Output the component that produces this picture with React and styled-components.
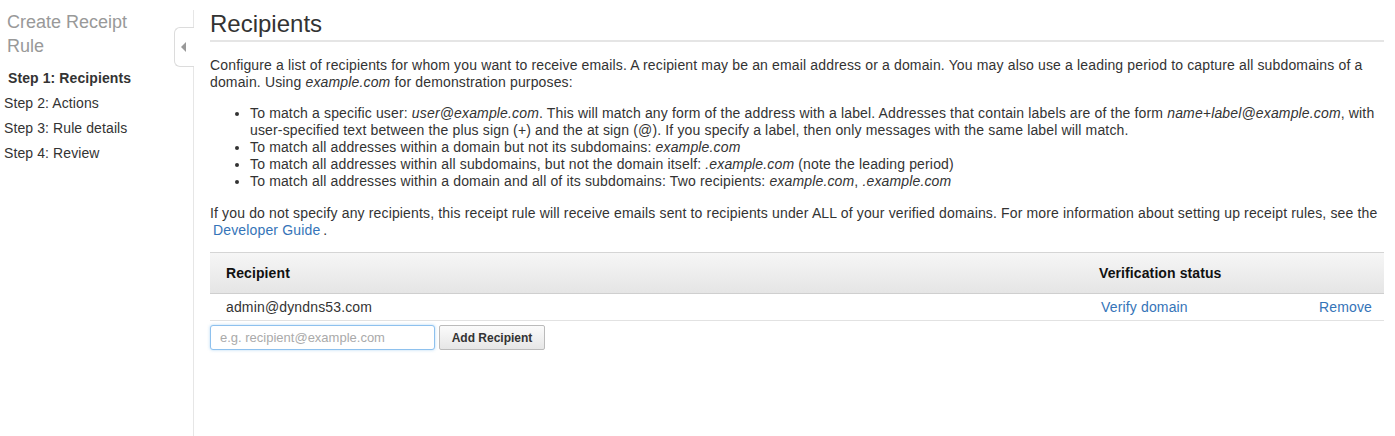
import React from 'react'
import styled, { createGlobalStyle } from 'styled-components'

const GlobalStyle = createGlobalStyle`
  html, body {
    margin: 0;
    padding: 0;
    background: #fff;
  }
  body {
    font-family: 'Liberation Sans', Arial, sans-serif;
    font-size: 14px;
    color: #333;
  }
`

const Page = styled.div`
  display: flex;
  width: 1395px;
  height: 436px;
  overflow: hidden;
`

const Sidebar = styled.div`
  position: relative;
  width: 193px;
  flex-shrink: 0;
  margin-top: 10px;
  border-right: 1px solid #e6e6e6;
`

const SideTitle = styled.div`
  font-size: 18px;
  line-height: 24px;
  color: #999;
  padding-left: 7px;
  width: 150px;
`

const Steps = styled.div`
  margin-top: 8px;
  display: flex;
  flex-direction: column;
`

const Step = styled.div`
  font-size: 14px;
  line-height: 25px;
  color: #333;
  letter-spacing: 0.1px;
  padding-left: ${p => (p.$active ? '8px' : '4px')};
  font-weight: ${p => (p.$active ? 700 : 400)};
`

const CollapseTab = styled.div`
  position: absolute;
  right: -1px;
  top: 17px;
  width: 20px;
  height: 40px;
  background: #fff;
  border: 1px solid #dcdcdc;
  border-right: none;
  border-radius: 6px 0 0 6px;
  display: flex;
  align-items: center;
  justify-content: center;
  padding-right: 2px;
  box-sizing: border-box;
`

const Arrow = styled.span`
  width: 0;
  height: 0;
  border-top: 5px solid transparent;
  border-bottom: 5px solid transparent;
  border-right: 5px solid #999;
`

const Main = styled.div`
  flex: 1;
  padding: 0 11px 0 16px;
  letter-spacing: 0.15px;
`

const Heading = styled.h1`
  margin: 10px 0 0;
  font-size: 24px;
  font-weight: 400;
  line-height: 28px;
  letter-spacing: 0;
  color: #333;
  padding-bottom: 2px;
  border-bottom: 2px solid #e5e5e5;
`

const Para = styled.p`
  margin: ${p => p.$top || '14px'} 0 0;
  line-height: 17px;
`

const List = styled.ul`
  margin: 14px 0 0;
  padding-left: 40px;
  line-height: 17px;
`

const Link = styled.a`
  color: #3574b8;
  text-decoration: none;
  padding: 0 ${p => (p.$pad ? '3px' : '0')};
  cursor: pointer;
`

const Table = styled.div`
  margin-top: 13px;
  border-top: 1px solid #d5d5d5;
`

const HeadRow = styled.div`
  display: grid;
  grid-template-columns: 873px 1fr auto;
  height: 40px;
  align-items: center;
  background: linear-gradient(#f6f6f6, #e5e5e5);
  border-bottom: 1px solid #cfcfcf;
  font-weight: 700;
  letter-spacing: 0.1px;
  color: #111;
`

const Row = styled.div`
  display: grid;
  grid-template-columns: 875px 1fr auto;
  height: 26px;
  align-items: center;
  border-bottom: 1px solid #e2e2e2;
`

const Cell = styled.div`
  padding-left: ${p => p.$pl || '16px'};
  padding-right: ${p => p.$pr || '0'};
`

const AddBar = styled.div`
  display: flex;
  gap: 4px;
  margin-top: 4px;
`

const Input = styled.input`
  width: 225px;
  height: 25px;
  box-sizing: border-box;
  border: 1px solid #8ec1ee;
  border-radius: 3px;
  box-shadow: 0 0 3px rgba(102, 175, 233, 0.5);
  padding: 0 9px;
  font-family: 'Liberation Sans', Arial, sans-serif;
  font-size: 13px;
  outline: none;
  &::placeholder {
    color: #aaa;
  }
`

const Button = styled.button`
  width: 106px;
  height: 25px;
  border: 1px solid #bbb;
  border-radius: 2px;
  background: linear-gradient(#fbfbfb, #e6e6e6);
  font-family: 'Liberation Sans', Arial, sans-serif;
  font-size: 12px;
  font-weight: 700;
  color: #333;
  padding: 0;
  cursor: pointer;
`

const App = () => {
  return (
    <Page>
      <GlobalStyle />
      <Sidebar>
        <SideTitle>Create Receipt Rule</SideTitle>
        <Steps>
          <Step $active>Step 1: Recipients</Step>
          <Step>Step 2: Actions</Step>
          <Step>Step 3: Rule details</Step>
          <Step>Step 4: Review</Step>
        </Steps>
        <CollapseTab>
          <Arrow />
        </CollapseTab>
      </Sidebar>
      <Main>
        <Heading>Recipients</Heading>
        <Para $top="15px">
          Configure a list of recipients for whom you want to receive emails. A recipient may be an email address or a domain. You may also use a leading period to capture all subdomains of a domain. Using <i>example.com</i> for demonstration purposes:
        </Para>
        <List>
          <li>
            To match a specific user: <i>user@example.com</i>. This will match any form of the address with a label. Addresses that contain labels are of the form <i>name+label@example.com</i>, with user-specified text between the plus sign (+) and the at sign (@). If you specify a label, then only messages with the same label will match.
          </li>
          <li>To match all addresses within a domain but not its subdomains: <i>example.com</i></li>
          <li>To match all addresses within all subdomains, but not the domain itself: <i>.example.com</i> (note the leading period)</li>
          <li>To match all addresses within a domain and all of its subdomains: Two recipients: <i>example.com</i>, <i>.example.com</i></li>
        </List>
        <Para $top="15px">
          If you do not specify any recipients, this receipt rule will receive emails sent to recipients under ALL of your verified domains. For more information about setting up receipt rules, see the <Link $pad>Developer Guide</Link>.
        </Para>
        <Table>
          <HeadRow>
            <Cell>Recipient</Cell>
            <Cell $pl="16px">Verification status</Cell>
            <Cell />
          </HeadRow>
          <Row>
            <Cell>admin@dyndns53.com</Cell>
            <Cell $pl="16px"><Link>Verify domain</Link></Cell>
            <Cell $pr="12px"><Link>Remove</Link></Cell>
          </Row>
        </Table>
        <AddBar>
          <Input placeholder="e.g. recipient@example.com" />
          <Button>Add Recipient</Button>
        </AddBar>
      </Main>
    </Page>
  )
}

export default App
